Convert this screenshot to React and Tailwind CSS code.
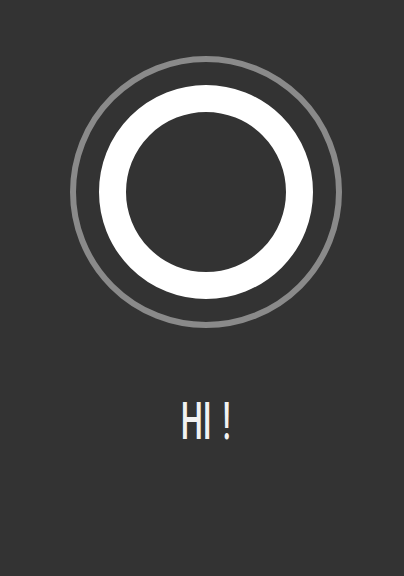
export default function App() {
  return (
    <div className="flex h-[576px] w-full flex-col items-center bg-[#333333] pt-[56px] pl-[8px]">
      <div className="flex h-[272px] w-[272px] items-center justify-center rounded-full border-[6px] border-[#8a8a8a]">
        <div className="h-[214px] w-[214px] rounded-full border-[27px] border-white" />
      </div>
      <div
        className="mt-[68px] scale-x-[0.6] text-[52px] leading-[52px] font-medium text-[#f2f2f2]"
        style={{ fontFamily: 'Roboto, "Liberation Sans", sans-serif' }}
      >
        HI<span className="ml-[18px]">!</span>
      </div>
    </div>
  );
}
